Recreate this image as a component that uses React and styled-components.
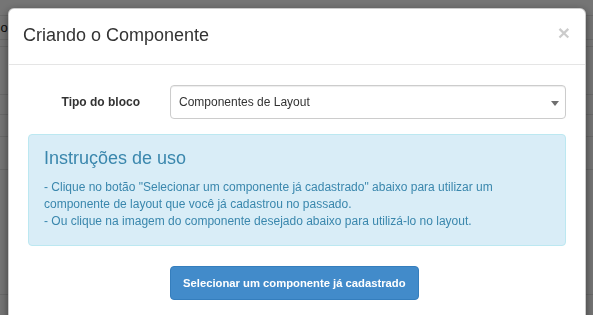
import React from "react";
import styled, { createGlobalStyle } from "styled-components";

const Global = createGlobalStyle`
  html, body { margin: 0; padding: 0; height: 100%; overflow: hidden; }
  body {
    background: #ebebeb;
    font-family: "Liberation Sans", Arial, Helvetica, sans-serif;
    font-size: 12px;
    color: #333;
  }
  * { box-sizing: border-box; }
`;

const Page = styled.div`
  display: flex;
  flex-direction: column;
`;

const PageRow = styled.div`
  height: ${(p) => p.$h}px;
  border-bottom: 1px solid #d4d4d4;
  display: flex;
  align-items: center;
  font-size: 13px;
  color: #111;
  white-space: nowrap;
`;

const HeadCell = styled.span`
  display: block;
  margin-left: -9px;
`;

const Backdrop = styled.div`
  position: fixed;
  inset: 0;
  background: rgba(0, 0, 0, 0.5);
`;

const Modal = styled.div`
  position: fixed;
  top: 8px;
  left: 8px;
  width: 578px;
  bottom: -60px;
  background: #fff;
  border: 1px solid rgba(0, 0, 0, 0.2);
  border-radius: 6px;
  box-shadow: 0 3px 9px rgba(0, 0, 0, 0.5);
  display: flex;
  flex-direction: column;
`;

const Header = styled.div`
  display: flex;
  justify-content: space-between;
  align-items: flex-start;
  padding: 14px 15px 15px 14px;
  border-bottom: 1px solid #e5e5e5;
`;

const Title = styled.h4`
  margin: 0;
  font-size: 18px;
  font-weight: normal;
  line-height: 1.42857;
  color: #333;
`;

const Close = styled.button`
  background: none;
  border: 0;
  padding: 0;
  margin-top: -1px;
  font-family: "Liberation Sans", Arial, sans-serif;
  font-size: 21px;
  font-weight: bold;
  line-height: 1;
  color: #000;
  opacity: 0.2;
  cursor: pointer;
`;

const Body = styled.div`
  padding: 20px 19px 20px 19px;
`;

const FormRow = styled.div`
  display: flex;
  align-items: center;
  gap: 30px;
  margin-bottom: 15px;
`;

const Label = styled.label`
  width: 112px;
  text-align: right;
  font-weight: bold;
  font-size: 12px;
  color: #333;
`;

const SelectWrap = styled.div`
  position: relative;
  flex: 1;
`;

const Select = styled.select`
  display: block;
  width: 100%;
  height: 34px;
  padding: 0 24px 0 8px;
  border: 1px solid #ccc;
  border-radius: 4px;
  background: #fff;
  box-shadow: inset 0 1px 1px rgba(0, 0, 0, 0.075);
  appearance: none;
  -webkit-appearance: none;
  font-family: "Liberation Sans", Arial, sans-serif;
  font-size: 12px;
  color: #333;
  outline: none;
`;

const Arrow = styled.svg`
  position: absolute;
  right: 7px;
  top: 16px;
  pointer-events: none;
`;

const Alert = styled.div`
  background: #d9edf7;
  border: 1px solid #bce8f1;
  border-radius: 4px;
  color: #3a87ad;
  padding: 14px 15px 15px;
  margin-bottom: 20px;
`;

const AlertTitle = styled.h4`
  margin: 0 0 10px;
  font-size: 18px;
  font-weight: normal;
  line-height: 1.1;
  color: inherit;
`;

const AlertText = styled.p`
  margin: 0;
  font-size: 12px;
  line-height: 17px;
`;

const ButtonRow = styled.div`
  padding-left: 142px;
`;

const Button = styled.button`
  height: 34px;
  padding: 0 12px;
  background: #428bca;
  border: 1px solid #357ebd;
  border-radius: 4px;
  color: #fff;
  font-family: "Liberation Sans", Arial, sans-serif;
  font-size: 11.25px;
  font-weight: bold;
  cursor: pointer;
`;

const rows = [16, 24, 7, 48, 20, 22, 33, 125];

export default function App() {
  return (
    <>
      <Global />
      <Page>
        {rows.map((h, i) => (
          <PageRow key={i} $h={h}>
            {i === 1 ? <HeadCell>Co</HeadCell> : null}
          </PageRow>
        ))}
      </Page>
      <Backdrop />
      <Modal>
        <Header>
          <Title>Criando o Componente</Title>
          <Close aria-label="Fechar">×</Close>
        </Header>
        <Body>
          <FormRow>
            <Label>Tipo do bloco</Label>
            <SelectWrap>
              <Select defaultValue="layout">
                <option value="layout">Componentes de Layout</option>
              </Select>
              <Arrow width="8" height="5" viewBox="0 0 8 5">
                <path d="M0 0 L8 0 L4 5 Z" fill="#6f6f6f" />
              </Arrow>
            </SelectWrap>
          </FormRow>
          <Alert>
            <AlertTitle>Instruções de uso</AlertTitle>
            <AlertText>
              - Clique no botão "Selecionar um componente já cadastrado" abaixo para utilizar um componente de layout que você já cadastrou no passado.
              <br />
              - Ou clique na imagem do componente desejado abaixo para utilizá-lo no layout.
            </AlertText>
          </Alert>
          <ButtonRow>
            <Button>Selecionar um componente já cadastrado</Button>
          </ButtonRow>
        </Body>
      </Modal>
    </>
  );
}
